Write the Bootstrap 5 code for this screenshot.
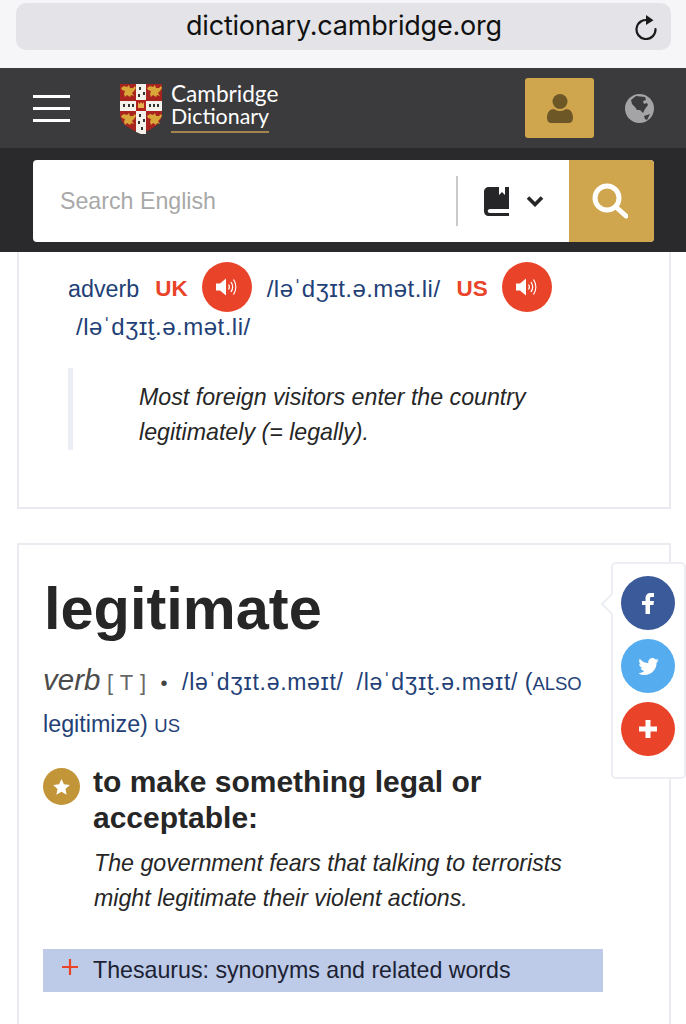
<!DOCTYPE html>
<html lang="en">
<head>
  <meta charset="UTF-8" />
  <title>legitimate - Cambridge Dictionary</title>
  <meta name="viewport" content="width=device-width, initial-scale=1" />
  <link href="https://cdn.jsdelivr.net/npm/bootstrap@5.3.0/dist/css/bootstrap.min.css" rel="stylesheet" />
  <style>
    body { font-family: "Liberation Sans", Arial, sans-serif; background: #fff; color: #262626; }

    .url-area { height: 68px; background: #f6f6f9; padding: 3px 15px 0 16px; }
    .url-pill { height: 47px; background: #e4e4e8; border-radius: 10px; font-family: Inter, "Noto Sans", sans-serif; font-size: 27px; color: #111; padding-right: 13px; }
    .url-text { margin-left: 170px; letter-spacing: -.2px; }

    .top-bar { height: 80px; background: #3b3a3c; padding: 10px 32px 10px 33px; }
    .burger { width: 37px; }
    .burger span { display: block; height: 3px; background: #fff; margin: 9px 0; }
    .brand-logo { margin-left: 50px; margin-top: 2px; }
    .brand-name { margin-left: 9px; color: #fff; font-family: Lato, "Open Sans", sans-serif; font-size: 22.6px; line-height: 22px; }
    .brand-name span { display: block; width: fit-content; }
    .brand-name .under { border-bottom: 2px solid #a3854f; padding-bottom: 4px; font-size: 21.4px; }
    .user-btn { width: 69px; height: 60px; background: #cfa54e; border-radius: 3px; }
    .globe { margin-left: 31px; }

    .search-band { height: 104px; background: #2a292b; padding: 12px 32px 10px 33px; }
    .search-box { height: 82px; background: #fff; border-radius: 4px; overflow: hidden; }
    .search-hint { padding-left: 27px; font-size: 23.2px; color: #a8a8a8; }
    .dict-pick { width: 113px; height: 50px; border-left: 2px solid #cacaca; padding-left: 26px; gap: 17px; }
    .search-go { width: 85px; background: #cfa54e; padding-right: 3px; }

    .entry-box { border: 2px solid #e9ebf1; margin: 0 15px 0 17px; background: #fff; }
    .first-box { height: 257px; border-top: 0; padding: 10px 0 0 49px; }
    .second-box { height: 481px; margin-top: 34px; padding: 0 0 0 24px; border-bottom: 0; }

    .ipa-line { font-size: 23.3px; line-height: 50px; color: #233f77; }
    .ipa-line .lift { line-height: 44px; padding-top: 4px; }
    .ipa-text { letter-spacing: .45px; font-size: 24px; }
    .ipa-line .ipa-wrap { line-height: 30px; margin-left: 8px; letter-spacing: .5px; }
    .region { color: #e9442a; font-weight: 700; font-size: 22.5px; margin: 0 14px 0 16px; }
    .sound { width: 50px; height: 50px; background: #e9442a; }
    .pron { margin-left: 15px; }

    .quote-bar { border-left: 5px solid #eceef6; margin: 26px 0 0; height: 82px; padding: 12px 0 0 66px; font-size: 23.2px; line-height: 35px; font-style: italic; color: #262626; }

    .word-title { font-size: 59.500px; font-weight: 700; line-height: 66px; margin: 31px 0 0 1px; color: #262626; }
    .word-meta { margin-top: 18px; font-size: 23.3px; line-height: 40px; color: #233f77; width: 565px; }
    .pos { font-size: 29.500px; font-style: italic; color: #4b4b4b; }
    .gram { font-size: 22px; color: #666; margin: 0 14px 0 0; letter-spacing: .5px; }
    .dot { color: #444; font-size: 20px; margin-right: 8px; }
    .meta-ipa { letter-spacing: .7px; font-size: 23px; }
    .small-cap { font-size: 18.5px; }
    .small-us { font-size: 18.500px; }

    .sense { margin-top: 18px; }
    .star-dot { width: 37px; height: 37px; background: #c29538; flex-shrink: 0; margin: 4px 13px 0 0; }
    .sense-title { font-size: 30px; line-height: 36px; font-weight: 700; color: #262626; }
    .sense-eg { margin: 10px 0 0 51px; font-size: 23.2px; line-height: 35px; font-style: italic; }
    .thes-bar { width: 560px; height: 43px; background: #bdcbe8; margin-top: 33px; font-size: 23.2px; color: #1c2233; padding-left: 19px; }
    .thes-plus { margin: -7px 15px 0 0; }

    .share-pop { position: absolute; left: 611px; top: 562px; width: 75px; height: 217px; background: #fff; border: 2px solid #eceef3; border-radius: 5px; padding: 12px 0 0 8px; }
    .share-pop::before { content: ""; position: absolute; left: -9px; top: 32px; width: 16px; height: 16px; background: #fff; border-left: 2px solid #eceef3; border-bottom: 2px solid #eceef3; transform: rotate(45deg); }
    .share-round { width: 54px; height: 54px; margin-bottom: 9px; position: relative; }
    .share-fb { background: #3b5a9a; }
    .share-tw { background: #55acee; }
    .share-plus { background: #e9442a; }
  </style>
</head>
<body>

<div class="url-area">
  <div class="url-pill d-flex align-items-center justify-content-between">
    <span class="url-text">dictionary.cambridge.org</span>
    <svg width="24" height="26" viewBox="0 0 24 26" fill="none" stroke="#1a1a1a" stroke-width="2.2">
      <path d="M15 6.500a9.500 9.500 0 1 0 6.500 8.600" stroke-linecap="round"/>
      <path d="M12 1l7.500 5.200L12 11z" fill="#1a1a1a" stroke="none"/>
    </svg>
  </div>
</div>

<div class="top-bar d-flex align-items-center">
  <div class="burger"><span></span><span></span><span></span></div>
  <svg class="brand-logo" width="42" height="50" viewBox="0 0 42 50">
    <defs>
      <path id="lion" d="M0 3l3-2 3 1 2-2 1 3 3 0 2-2 1 2-2 3-2 2 2 3-3-1-1 2-3-2-2 2-1-3 1-3-3-1z" fill="#d9a63a"/>
    </defs>
    <path d="M0 0h42v30c0 10-10 15-21 20C10 45 0 40 0 30z" fill="#a9231f"/>
    <path d="M16 0h10v50h-5c-2-1-3-1-5-2z" fill="#f4f1ea"/>
    <path d="M0 17h42v10H0z" fill="#f4f1ea"/>
    <path d="M16 16h10v11H16z" fill="#b3201d"/>
    <use href="#lion" x="1" y="1"/>
    <use href="#lion" x="27" y="1"/>
    <use href="#lion" x="1" y="29"/>
    <use href="#lion" x="27" y="29"/>
    <path d="M19 3h2v3h-2zM23 8h2v3h-2zM18 10h2v3h-2zM3 20h2v3H3zM8 20h2v3H8zM12 20h2v3h-2zM29 20h2v3h-2zM33 20h2v3h-2zM37 20h2v3h-2zM19 30h2v3h-2zM23 35h2v3h-2zM18 37h2v3h-2zM21 43h2v3h-2z" fill="#333"/>
    <path d="M18 18l1.500 2 1.500-2 1.500 2 1.500-2v6h-6z" fill="#e3b04a"/>
  </svg>
  <div class="brand-name">
    <span>Cambridge</span>
    <span class="under">Dictionary</span>
  </div>
  <div class="user-btn ms-auto d-flex align-items-center justify-content-center">
    <svg width="26" height="29" viewBox="0 0 26 29" fill="#6e5726">
      <circle cx="13" cy="7.500" r="7.500"/>
      <path d="M0 24c0-6 3-9 7-9 2 1.500 4 2 6 2s4-.5 6-2c4 0 7 3 7 9 0 3-2 5-4 5H4c-2 0-4-2-4-5z"/>
    </svg>
  </div>
  <svg class="globe" width="29" height="29" viewBox="0 0 29 29">
    <circle cx="14.500" cy="14.500" r="14.500" fill="#a4a4a6"/>
    <path d="M6 6l5-4 9 1 1 3-3 1 1 3 3-1 1 2-3 4-2 4-3-3-3 0-2-3-3-3zM19 22l6-2-3 6-2-1z" fill="#3b3a3c"/>
  </svg>
</div>

<div class="search-band">
  <div class="search-box d-flex align-items-center">
    <div class="search-hint flex-grow-1">Search English</div>
    <div class="dict-pick d-flex align-items-center">
      <svg width="25" height="29" viewBox="0 0 25 29">
        <path d="M5 0h20v22H6c-3 0-3 4 0 4h19v3H5c-3 0-5-2-5-5V5c0-3 2-5 5-5z" fill="#262628"/>
        <path d="M15 0h6v8l-3-3-3 3z" fill="#fff"/>
      </svg>
      <svg width="18" height="12" viewBox="0 0 18 12"><path d="M2 2.500l7 7 7-7" fill="none" stroke="#262628" stroke-width="3.600"/></svg>
    </div>
    <div class="search-go align-self-stretch d-flex align-items-center justify-content-center">
      <svg width="36" height="36" viewBox="0 0 36 36" fill="none" stroke="#fff">
        <circle cx="15" cy="15" r="12" stroke-width="5"/>
        <path d="M24 24l10 9" stroke-width="5" stroke-linecap="round"/>
      </svg>
    </div>
  </div>
</div>

<div class="entry-box first-box">
  <div class="ipa-line d-flex flex-wrap align-items-center">
    <span class="lift">adverb</span>
    <span class="region lift">UK</span>
    <span class="sound rounded-circle d-flex align-items-center justify-content-center">
      <svg width="21" height="20" viewBox="0 0 21 20" fill="none" stroke="#fff" stroke-width="1.300"><path d="M0 6.500h4l6-5v17l-6-5H0z" fill="#fff" stroke="none"/><path d="M12.500 7.500c1 1.500 1 3.500 0 5M15 5c2 3 2 7 0 10M17.500 2.500c3 4.500 3 10.500 0 15"/></svg>
    </span>
    <span class="pron ipa-text lift">/ləˈdʒɪt.ə.mət.li/</span>
    <span class="region lift">US</span>
    <span class="sound rounded-circle d-flex align-items-center justify-content-center">
      <svg width="21" height="20" viewBox="0 0 21 20" fill="none" stroke="#fff" stroke-width="1.300"><path d="M0 6.500h4l6-5v17l-6-5H0z" fill="#fff" stroke="none"/><path d="M12.500 7.500c1 1.500 1 3.500 0 5M15 5c2 3 2 7 0 10M17.500 2.500c3 4.500 3 10.500 0 15"/></svg>
    </span>
    <span class="ipa-wrap ipa-text w-100">/ləˈdʒɪt̬.ə.mət.li/</span>
  </div>
  <div class="quote-bar">Most foreign visitors enter the country<br />legitimately (= legally).</div>
</div>

<div class="entry-box second-box">
  <h1 class="word-title">legitimate</h1>
  <div class="word-meta">
    <span class="pos">verb</span><span class="gram"> [ T ]</span><span class="dot">•</span>
    <span class="meta-ipa">/ləˈdʒɪt.ə.məɪt/</span>&nbsp;
    <span class="meta-ipa">/ləˈdʒɪt̬.ə.məɪt/</span>
    <span>(<span class="small-cap">ALSO</span> legitimize)</span>
    <span class="small-us">US</span>
  </div>
  <div class="sense d-flex">
    <span class="star-dot rounded-circle d-flex align-items-center justify-content-center">
      <svg width="17" height="16" viewBox="0 0 24 23"><path d="M12 0l3.500 7.600 8.500 1-6.300 5.700 1.700 8.400L12 18.500 4.600 22.700l1.700-8.400L0 8.600l8.500-1z" fill="#fff"/></svg>
    </span>
    <div class="sense-title">to make something legal or<br />acceptable:</div>
  </div>
  <div class="sense-eg">The government fears that talking to terrorists<br />might legitimate their violent actions.</div>
  <div class="thes-bar d-flex align-items-center">
    <svg class="thes-plus" width="16" height="16" viewBox="0 0 16 16"><path d="M8 0v16M0 8h16" stroke="#e9442a" stroke-width="2.200"/></svg>
    <span>Thesaurus: synonyms and related words</span>
  </div>
</div>

<div class="share-pop">
  <div class="share-round share-fb rounded-circle d-flex align-items-center justify-content-center">
    <svg width="12" height="21" viewBox="0 0 12 21"><path d="M3.500 21V12H0V8h3.500V5.500C3.500 2 5.500 0 8.500 0H12v4H9.500C8.300 4 8 4.600 8 5.600V8h4l-.6 4H8v9z" fill="#fff"/></svg>
  </div>
  <div class="share-round share-tw rounded-circle d-flex align-items-center justify-content-center">
    <svg width="21" height="17" viewBox="0 0 24 20"><path d="M24 2.400c-.9.400-1.800.7-2.800.8 1-.6 1.800-1.600 2.200-2.700-1 .6-2 1-3.100 1.200A4.900 4.900 0 0 0 11.900 6.200C7.800 6 4.200 4 1.700.9.400 3.100 1 6 3.200 7.500c-.8 0-1.600-.2-2.200-.6 0 2.300 1.600 4.400 3.900 4.900-.7.200-1.500.2-2.200.1.600 2 2.400 3.400 4.600 3.400A9.900 9.900 0 0 1 0 17.800 14 14 0 0 0 7.500 20C16.600 20 21.800 12.300 21.500 5.400c1-.7 1.800-1.600 2.500-3z" fill="#fff"/></svg>
  </div>
  <div class="share-round share-plus rounded-circle d-flex align-items-center justify-content-center">
    <svg width="18" height="18" viewBox="0 0 18 18"><path d="M9 0v18M0 9h18" stroke="#fff" stroke-width="5"/></svg>
  </div>
</div>

<script src="https://cdn.jsdelivr.net/npm/bootstrap@5.3.0/dist/js/bootstrap.bundle.min.js"></script>
</body>
</html>
